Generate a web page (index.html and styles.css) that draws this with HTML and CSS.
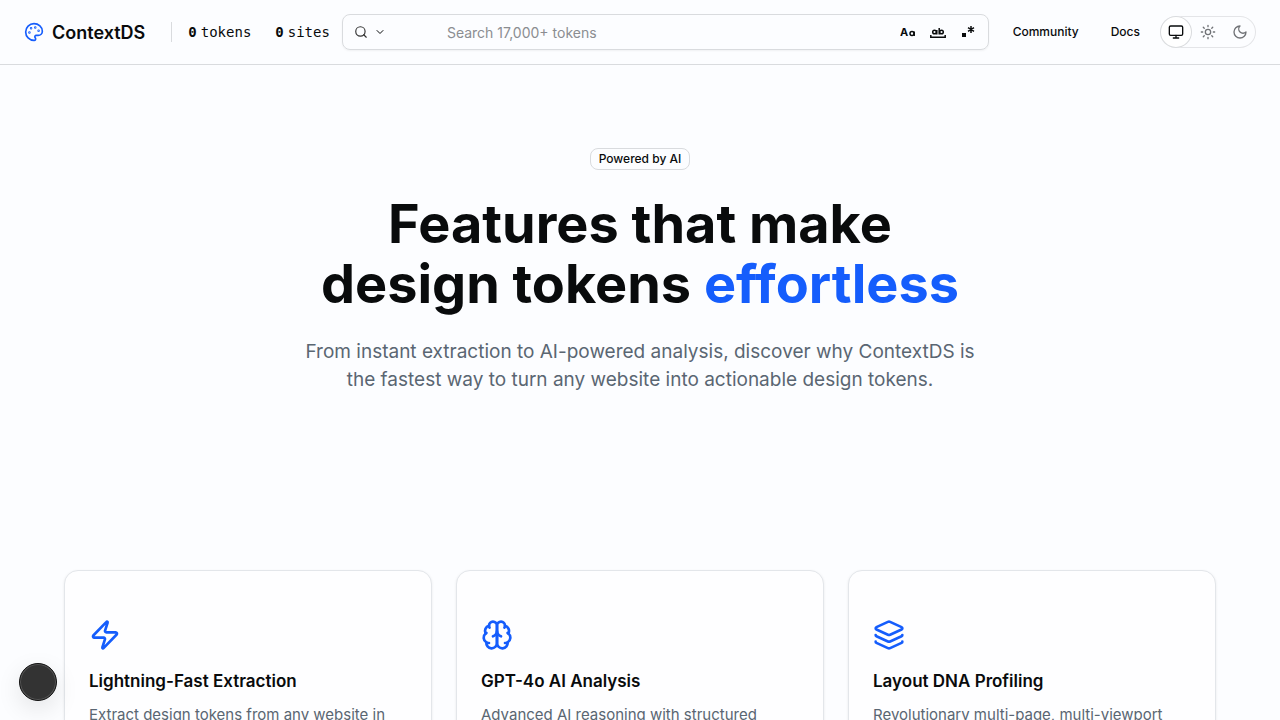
FILE: index.html
```html
<!DOCTYPE html>
<html lang="en">
<head>
<meta charset="utf-8">
<meta name="viewport" content="width=device-width, initial-scale=1">
<title>ContextDS Features</title>
<link rel="stylesheet" href="styles.css">
</head>
<body>
<div class="app">
<header class="header">
  <a class="brand" href="#">
    <svg class="icon brand-icon" viewBox="0 0 24 24"><path d="M12 22a1 1 0 0 1 0-20 10 9 0 0 1 10 9 5 5 0 0 1-5 5h-2.250a1.750 1.750 0 0 0-1.400 2.800l.300.400a1.750 1.750 0 0 1-1.400 2.800z"/><circle cx="13.500" cy="6.500" r=".5"/><circle cx="17.500" cy="10.500" r=".5"/><circle cx="6.500" cy="12.500" r=".5"/><circle cx="8.500" cy="7.500" r=".5"/></svg>
    <span>ContextDS</span>
  </a>
  <div class="stats">
    <p class="stat"><strong>0</strong><span>tokens</span></p>
    <p class="stat"><strong>0</strong><span>sites</span></p>
  </div>
  <form class="search">
    <button class="mode" type="button" aria-label="Search mode">
      <svg class="icon mode-icon" viewBox="0 0 24 24"><circle cx="11" cy="11" r="8"/><path d="m21 21-4.300-4.300"/></svg>
      <svg class="icon chevron" viewBox="0 0 24 24"><path d="m6 9 6 6 6-6"/></svg>
    </button>
    <input class="search-input" type="text" aria-label="Search tokens" placeholder="Search 17,000+ tokens">
    <button class="option" type="button" aria-label="Match case">
      <svg class="option-icon" viewBox="0 0 16 16"><text class="option-text" x="0" y="12">A</text><circle cx="12" cy="9.500" r="2"/><path d="M14.200 7.500v4.500"/></svg>
    </button>
    <button class="option" type="button" aria-label="Match whole word">
      <svg class="option-icon" viewBox="0 0 16 16"><circle cx="4.500" cy="8" r="1.800"/><path d="M6.800 6V10.500M9.200 4v6.500M.800 11v2.200h14.400V11"/><circle cx="11.500" cy="8" r="1.800"/></svg>
    </button>
    <button class="option" type="button" aria-label="Use regular expression">
      <svg class="option-icon" viewBox="0 0 16 16"><path class="dot" d="M2 9h4v4H2z"/><path d="M11 2v7M8 3.700l6 3.600M14 3.700l-6 3.600"/></svg>
    </button>
  </form>
  <nav class="nav">
    <a href="#">Community</a>
    <a href="#">Docs</a>
  </nav>
  <div class="themes">
    <button class="theme theme-active" type="button" aria-label="System theme"><svg class="icon" viewBox="0 0 24 24"><rect x="2" y="3" width="20" height="14" rx="2"/><path d="M8 21h8M12 17v4"/></svg></button>
    <button class="theme" type="button" aria-label="Light theme"><svg class="icon" viewBox="0 0 24 24"><circle cx="12" cy="12" r="4"/><path d="M12 2v2M12 20v2M4.930 4.930l1.410 1.410M17.660 17.660l1.410 1.410M2 12h2M20 12h2M6.340 17.660l-1.410 1.410M19.070 4.930l-1.410 1.410"/></svg></button>
    <button class="theme" type="button" aria-label="Dark theme"><svg class="icon" viewBox="0 0 24 24"><path d="M12 3a6 6 0 0 0 9 9 9 9 0 1 1-9-9"/></svg></button>
  </div>
</header>
<main class="main">
  <section class="hero">
    <span class="badge">Powered by AI</span>
    <h1 class="title">Features that make<br>design tokens <span class="accent">effortless</span></h1>
    <p class="lead">From instant extraction to AI-powered analysis, discover why ContextDS is the fastest way to turn any website into actionable design tokens.</p>
  </section>
  <section class="cards">
    <article class="card">
      <svg class="icon card-icon" viewBox="0 0 24 24"><path d="M4 14a1 1 0 0 1-.780-1.630l9.900-10.200a.5.5 0 0 1 .860.460l-1.920 6.020A1 1 0 0 0 13 10h7a1 1 0 0 1 .780 1.630l-9.900 10.200a.5.5 0 0 1-.860-.460l1.920-6.020A1 1 0 0 0 11 14z"/></svg>
      <h2 class="card-title">Lightning-Fast Extraction</h2>
      <p class="card-text">Extract design tokens from any website in</p>
    </article>
    <article class="card">
      <svg class="icon card-icon" viewBox="0 0 24 24"><path d="M12 5a3 3 0 1 0-5.997.125 4 4 0 0 0-2.526 5.770 4 4 0 0 0 .556 6.588A4 4 0 1 0 12 18Z"/><path d="M12 5a3 3 0 1 1 5.997.125 4 4 0 0 1 2.526 5.770 4 4 0 0 1-.556 6.588A4 4 0 1 1 12 18Z"/><path d="M15 13a4.500 4.500 0 0 1-3-4 4.500 4.500 0 0 1-3 4M17.599 6.500a3 3 0 0 0 .399-1.375M6.003 5.125A3 3 0 0 0 6.401 6.500M3.477 10.896a4 4 0 0 1 .585-.396M19.938 10.500a4 4 0 0 1 .585.396M6 18a4 4 0 0 1-1.967-.516M19.967 17.484A4 4 0 0 1 18 18"/></svg>
      <h2 class="card-title">GPT-4o AI Analysis</h2>
      <p class="card-text">Advanced AI reasoning with structured</p>
    </article>
    <article class="card">
      <svg class="icon card-icon" viewBox="0 0 24 24"><path d="M12.830 2.180a2 2 0 0 0-1.660 0L2.600 6.080a1 1 0 0 0 0 1.830l8.580 3.910a2 2 0 0 0 1.660 0l8.580-3.900a1 1 0 0 0 0-1.830z"/><path d="M2 12a1 1 0 0 0 .580.910l8.600 3.910a2 2 0 0 0 1.650 0l8.580-3.900A1 1 0 0 0 22 12"/><path d="M2 17a1 1 0 0 0 .580.910l8.600 3.910a2 2 0 0 0 1.650 0l8.580-3.900A1 1 0 0 0 22 17"/></svg>
      <h2 class="card-title">Layout DNA Profiling</h2>
      <p class="card-text">Revolutionary multi-page, multi-viewport</p>
    </article>
  </section>
</main>
<button class="bubble" type="button" aria-label="Open tools"></button>
</div>
</body>
</html>
```
FILE: styles.css
```css
* { box-sizing: border-box; }
body {
  margin: 0;
  background: #fcfdff;
  color: #090b0c;
  font-family: Inter, "Liberation Sans", sans-serif;
}
h1, h2, p { margin: 0; }
a { color: inherit; text-decoration: none; }
button { margin: 0; padding: 0; border: 0; background: none; color: inherit; font: inherit; }
.app { height: 100vh; overflow: hidden; }
.icon {
  width: 16px;
  height: 16px;
  fill: none;
  stroke: currentColor;
  stroke-width: 2;
  stroke-linecap: round;
  stroke-linejoin: round;
}
.header {
  display: flex;
  align-items: center;
  height: 65px;
  padding: 0 24px;
  border-bottom: 1px solid #d9dbde;
}
.brand { display: flex; align-items: center; gap: 8px; font-size: 18px; font-weight: 600; }
.brand-icon { width: 20px; height: 20px; color: #155dfc; }
.stats {
  display: flex;
  align-items: center;
  gap: 24px;
  height: 20px;
  margin-left: 26px;
  padding: 0 12px 0 16px;
  border-left: 1px solid #d9dbde;
  font: 14px/20px "DejaVu Sans Mono", monospace;
}
.stat { display: flex; gap: 4px; }
.stat strong { font-weight: 700; }
.search {
  display: flex;
  align-items: center;
  flex: 1;
  min-width: 0;
  height: 36px;
  padding: 0 10px 0 11px;
  border: 1px solid #d9dbde;
  border-radius: 8px;
  box-shadow: 0 1px 2px rgba(0, 0, 0, .05);
}
.mode { display: flex; align-items: center; gap: 6px; width: 93px; }
.mode-icon { width: 14px; height: 14px; color: #333; }
.chevron { width: 12px; height: 12px; }
.search-input {
  flex: 1;
  min-width: 0;
  padding: 1px 0 0;
  border: 0;
  outline: 0;
  background: transparent;
  font: 14px/20px Inter, "Liberation Sans", sans-serif;
}
.search-input::placeholder { color: #8b8d91; opacity: 1; }
.option { display: grid; place-items: center; width: 20px; height: 20px; margin-left: 10px; }
.option-icon { width: 16px; height: 16px; fill: none; stroke: currentColor; stroke-width: 1.5; }
.option-text { fill: currentColor; stroke: none; font: 700 11px Inter, sans-serif; }
.dot { fill: currentColor; stroke: none; }
.nav { display: flex; gap: 32px; margin: 0 20px 0 24px; font-size: 12px; line-height: 16px; font-weight: 500; }
.themes { display: flex; border-radius: 16px; box-shadow: inset 0 0 0 1px #e4e5e8; }
.theme { display: grid; place-items: center; width: 32px; height: 32px; border-radius: 50%; color: #707276; }
.theme-active { background: #fff; color: #090b0c; box-shadow: inset 0 0 0 1px #d9dbde; }
.main { padding: 83px 64px 0; }
.hero { display: flex; flex-direction: column; align-items: center; text-align: center; }
.badge {
  padding: 2px 8px;
  border: 1px solid #d9dbde;
  border-radius: 8px;
  font-size: 12px;
  line-height: 16px;
  font-weight: 500;
}
.title { margin-top: 24px; font-size: 54px; line-height: 60px; font-weight: 700; }
.accent { color: #155dfc; }
.lead { max-width: 672px; margin-top: 24px; color: #5a6672; font-size: 19px; line-height: 28px; }
.cards { display: grid; grid-template-columns: repeat(3, minmax(0, 1fr)); gap: 24px; margin-top: 176px; }
.card {
  min-height: 240px;
  padding: 48px 24px 24px;
  border: 1px solid #e3e6ea;
  border-radius: 14px;
  background: #fefeff;
  box-shadow: 0 1px 3px rgba(0, 0, 0, .08);
}
.card-icon { display: block; width: 32px; height: 32px; color: #155dfc; }
.card-title { margin-top: 16px; font-size: 17px; line-height: 28px; font-weight: 600; }
.card-text { margin-top: 8px; color: #5a6672; font-size: 15px; line-height: 24px; }
.bubble {
  position: fixed;
  left: 19px;
  bottom: 19px;
  width: 38px;
  height: 38px;
  border: 1px solid #111;
  border-radius: 50%;
  background: #333;
  box-shadow: inset 0 0 0 1px #555, 0 8px 24px rgba(0, 0, 0, .1);
}
```
